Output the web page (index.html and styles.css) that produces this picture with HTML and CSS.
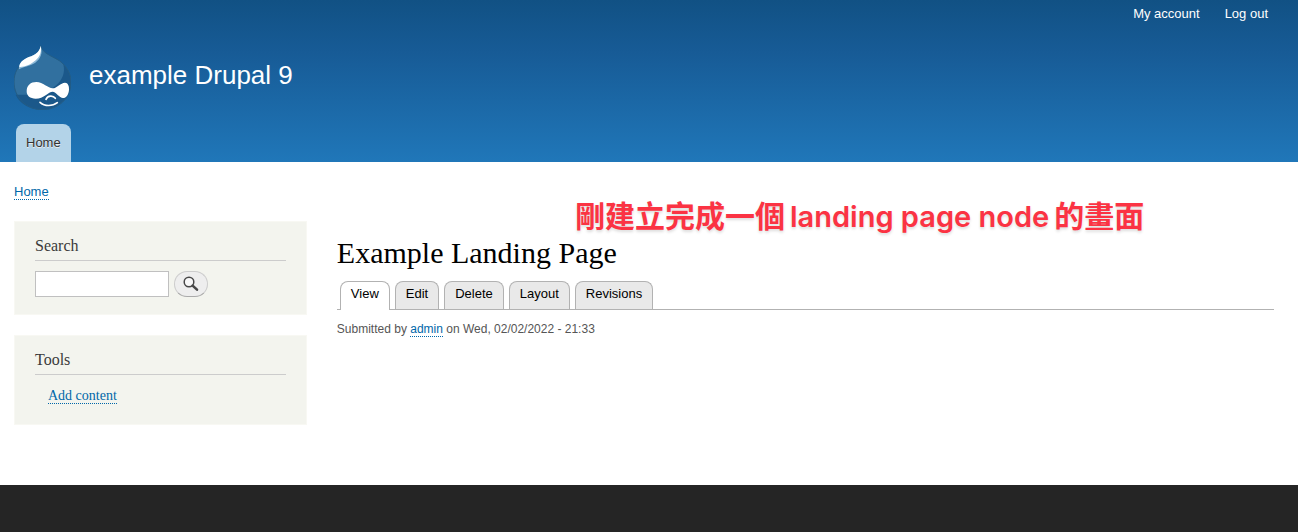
FILE: index.html
```
<!DOCTYPE html>
<html lang="en">
<head>
    <meta charset="UTF-8">
    <meta name="viewport" content="width=device-width, initial-scale=1.0">
    <title>Example Landing Page | example Drupal 9</title>
    <link rel="stylesheet" href="styles.css">
</head>
<body>
    <header class="header">
        <nav class="user-menu" aria-label="User account menu">
            <a href="#">My account</a>
            <a href="#">Log out</a>
        </nav>
        <div class="branding">
            <a href="#" class="logo" aria-label="Home">
                <svg width="57" height="65" viewBox="42 15 171 195">
                    <!-- drop -->
                    <path d="M122 17 C128 40 152 46 178 62 C200 78 213 102 213 126 C213 176 174 209 127 209 C79 209 42 172 42 126 C42 98 54 78 74 64 C96 48 121 46 122 17Z" fill="#31709f"/>
                    <path d="M190 73 C205 87 213 104 213 126 C213 176 174 209 127 209 C88 209 58 190 47 164 L100 164 C150 158 203 125 190 73Z" fill="#1b588a"/>
                    <path d="M122 17 C128 40 152 46 178 62 C200 78 213 102 213 126 C213 176 174 209 127 209 C79 209 42 172 42 126 C42 98 54 78 74 64 C96 48 121 46 122 17Z" fill="none" stroke="#245d85" stroke-width="3"/>
                    <!-- highlight -->
                    <path d="M57 88 C55 68 74 55 94 49 C112 41 119 34 122 18 C129 40 122 56 106 68 C88 80 70 79 57 88Z" fill="#8db9d8"/>
                    <path d="M58 81 C58 66 74 55 94 49 C112 41 119 32 122 18 C126 34 120 49 107 61 C90 76 71 82 58 81Z" fill="#fff"/>
                    <!-- face -->
                    <path d="M80 154 C80 136 92 126 109 126 C129 126 144 145 158 145 C171 145 182 128 195 128 C204 128 208 138 207 149 C206 163 199 174 189 174 C178 174 168 155 158 155 C145 155 132 176 107 176 C90 176 80 168 80 154Z" fill="#fff"/>
                    <path d="M138 178 C143 166 159 165 166 175 M120 187 C134 200 158 199 172 188" fill="none" stroke="#fff" stroke-width="5" stroke-linecap="round"/>
                </svg>
            </a>
            <a href="#" class="site-name">example Drupal 9</a>
        </div>
        <nav class="main-menu" aria-label="Main navigation">
            <a href="#">Home</a>
        </nav>
    </header>

    <main class="main">
        <p class="note" lang="zh-TW">剛建立完成一個<span class="note-latin" lang="en">landing page node</span>的畫面</p>
        <nav class="breadcrumb" aria-label="Breadcrumb">
            <a href="#" class="link">Home</a>
        </nav>
        <div class="columns">
            <aside class="sidebar">
                <section class="block">
                    <h2><label for="search">Search</label></h2>
                    <form class="search-form">
                        <input type="search" id="search" class="search-input">
                        <button type="submit" class="search-btn" aria-label="Search">
                            <svg width="16" height="16" viewBox="0 0 16 16">
                                <circle cx="6" cy="6" r="4.8" fill="#f8f8f8" stroke="#484848" stroke-width="1.5"/>
                                <path d="M9.6 9.6 L14 13.6" stroke="#484848" stroke-width="2.6" stroke-linecap="round"/>
                            </svg>
                        </button>
                    </form>
                </section>
                <section class="block">
                    <h2>Tools</h2>
                    <ul class="menu">
                        <li><a href="#" class="link">Add content</a></li>
                    </ul>
                </section>
            </aside>
            <article class="content">
                <h1>Example Landing Page</h1>
                <nav class="tabs" aria-label="Tabs">
                    <a href="#" class="tab active">View</a>
                    <a href="#" class="tab">Edit</a>
                    <a href="#" class="tab">Delete</a>
                    <a href="#" class="tab">Layout</a>
                    <a href="#" class="tab">Revisions</a>
                </nav>
                <p class="submitted">Submitted by <a href="#" class="link">admin</a> on Wed, 02/02/2022 - 21:33</p>
            </article>
        </div>
    </main>

    <footer class="footer"></footer>
</body>
</html>
```
FILE: styles.css
```
* {
    box-sizing: border-box;
}
body {
    display: flex;
    flex-direction: column;
    min-height: 100vh;
    margin: 0;
    font-family: "Liberation Sans", Arial, sans-serif;
    font-size: 13px;
    line-height: 16px;
    color: #3b3b3b;
    background-color: #fff;
}
a {
    text-decoration: none;
}
h1, h2, p, ul {
    margin: 0;
    padding: 0;
    font-weight: normal;
}
.link {
    color: #0067a9;
    border-bottom: 1px dotted #0067a9;
}

/* Header */
.header {
    background: linear-gradient(to bottom, #115184 0%, #175b96 32%, #2077b9 100%);
}
.user-menu {
    display: flex;
    justify-content: flex-end;
    gap: 25px;
    padding: 6px 30px 0 0;
}
.user-menu a {
    color: #fff;
}
.branding {
    display: flex;
    gap: 18px;
    padding: 23px 14px 0;
}
.logo svg {
    display: block;
}
.site-name {
    padding-top: 15px;
    font-size: 26px;
    line-height: 30px;
    color: #fff;
}
.main-menu {
    display: flex;
    padding: 14px 16px 0;
}
.main-menu a {
    padding: 11px 10px;
    border-radius: 8px 8px 0 0;
    background-color: #b3d3e8;
    color: #333;
    text-shadow: 0 1px #eee;
}

/* Main */
.main {
    position: relative;
    padding: 22px 24px 60px 14px;
}
.breadcrumb {
    padding-bottom: 21px;
}
.columns {
    display: grid;
    grid-template-columns: 5fr 16fr;
    gap: 30px;
}
.sidebar {
    display: flex;
    flex-direction: column;
    gap: 20px;
    font-family: "Liberation Serif", Georgia, serif;
}
.block {
    padding: 15px 20px 17px;
    border: 1px solid #f8f8f3;
    background-color: #f3f4ee;
}
.block h2 {
    padding-bottom: 5px;
    border-bottom: 1px solid #ccc;
    font-size: 16px;
    line-height: 18px;
}
.search-form {
    display: flex;
    gap: 5px;
    padding-top: 10px;
}
.search-input {
    width: 134px;
    height: 26px;
    margin: 0;
    padding: 2px 4px;
    border: 1px solid #c0c0c0;
    background-color: #fff;
    font-size: 14px;
}
.search-btn {
    display: flex;
    align-items: center;
    justify-content: center;
    width: 34px;
    height: 26px;
    padding: 0;
    border: 1px solid #ccc;
    border-bottom-color: #aaa;
    border-radius: 13px;
    background-color: #eee;
    cursor: pointer;
}
.menu {
    padding: 13px 0 3px 13px;
    list-style: none;
    font-size: 14px;
}

/* Content */
.content {
    padding-top: 15px;
}
.content h1 {
    font-family: "Liberation Serif", Georgia, serif;
    font-size: 30px;
    line-height: 34px;
    color: #000;
}
.tabs {
    display: flex;
    gap: 5px;
    margin-top: 11px;
    padding: 0 3px;
    border-bottom: 1px solid #b2b2b2;
}
.tab {
    padding: 4px 10px 7px;
    border: 1px solid #b2b2b2;
    border-bottom: 0;
    border-radius: 8px 8px 0 0;
    background-color: #e9e9e9;
    color: #000;
}
.tab.active {
    margin-bottom: -1px;
    background-color: #fff;
}
.submitted {
    padding-top: 11px;
    font-size: 12px;
    color: #555;
}

/* Annotation over the page */
.note {
    position: absolute;
    top: 34px;
    left: 575px;
    font-family: "Noto Sans CJK TC", sans-serif;
    font-size: 30px;
    line-height: 36px;
    font-weight: 600;
    color: #fb3343;
    text-shadow: 0 2px 3px #ddd;
    white-space: nowrap;
}
.note-latin {
    padding: 0 5px;
    font-family: Inter, sans-serif;
    font-size: 29px;
}

.footer {
    flex: 1;
    background-color: #252525;
}
```
